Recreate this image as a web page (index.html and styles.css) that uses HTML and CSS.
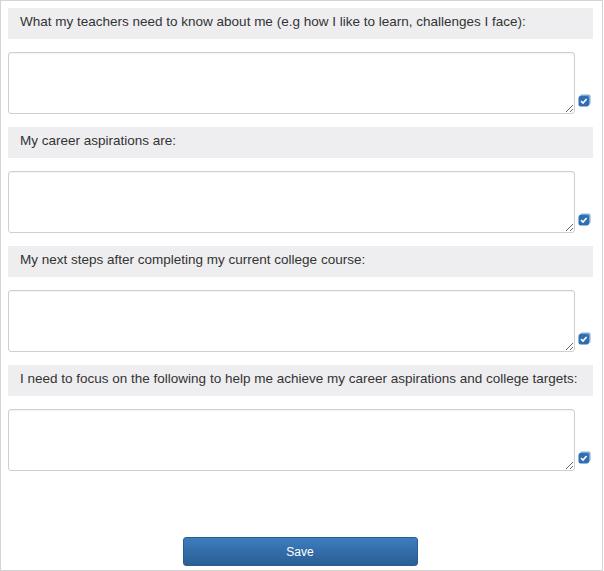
FILE: index.html
```html
<!DOCTYPE html>
<html lang="en">
<head>
  <meta charset="UTF-8">
  <title>My Profile</title>
  <link rel="stylesheet" href="styles.css">
</head>
<body>
  <div class="page">

    <div class="field">
      <div class="field-label">What my teachers need to know about me (e.g how I like to learn, challenges I face):</div>
      <div class="field-row">
        <textarea class="field-input"></textarea>
        <span class="spell-icon"><svg width="13" height="13" viewBox="0 0 13 13"><rect x="2" y="0.5" width="10.5" height="10.5" rx="2" fill="#7fa9d4"/><rect x="0.5" y="2" width="10.5" height="10.5" rx="2" fill="#2f6eb0"/><path d="M3 7.2 L5 9 L8.6 5" stroke="#fff" stroke-width="1.6" fill="none"/></svg></span>
      </div>
    </div>

    <div class="field">
      <div class="field-label">My career aspirations are:</div>
      <div class="field-row">
        <textarea class="field-input"></textarea>
        <span class="spell-icon"><svg width="13" height="13" viewBox="0 0 13 13"><rect x="2" y="0.5" width="10.5" height="10.5" rx="2" fill="#7fa9d4"/><rect x="0.5" y="2" width="10.5" height="10.5" rx="2" fill="#2f6eb0"/><path d="M3 7.2 L5 9 L8.6 5" stroke="#fff" stroke-width="1.6" fill="none"/></svg></span>
      </div>
    </div>

    <div class="field">
      <div class="field-label">My next steps after completing my current college course:</div>
      <div class="field-row">
        <textarea class="field-input"></textarea>
        <span class="spell-icon"><svg width="13" height="13" viewBox="0 0 13 13"><rect x="2" y="0.5" width="10.5" height="10.5" rx="2" fill="#7fa9d4"/><rect x="0.5" y="2" width="10.5" height="10.5" rx="2" fill="#2f6eb0"/><path d="M3 7.2 L5 9 L8.6 5" stroke="#fff" stroke-width="1.6" fill="none"/></svg></span>
      </div>
    </div>

    <div class="field">
      <div class="field-label">I need to focus on the following to help me achieve my career aspirations and college targets:</div>
      <div class="field-row">
        <textarea class="field-input"></textarea>
        <span class="spell-icon"><svg width="13" height="13" viewBox="0 0 13 13"><rect x="2" y="0.5" width="10.5" height="10.5" rx="2" fill="#7fa9d4"/><rect x="0.5" y="2" width="10.5" height="10.5" rx="2" fill="#2f6eb0"/><path d="M3 7.2 L5 9 L8.6 5" stroke="#fff" stroke-width="1.6" fill="none"/></svg></span>
      </div>
    </div>

    <div class="actions">
      <button class="save-btn">Save</button>
    </div>

  </div>
</body>
</html>
```

FILE: styles.css
```css
body {
  margin: 0;
  font-family: 'Liberation Sans', Arial, sans-serif;
  color: #333;
}

.page {
  box-sizing: border-box;
  width: 603px;
  height: 571px;
  border: 1px solid #d4d4d4;
  padding: 7px 0 0 7px;
}

.field {
  margin-bottom: 13px;
}

.field-label {
  box-sizing: border-box;
  width: 585px;
  height: 31px;
  padding: 4px 12px 0;
  background-color: #eeeef0;
  font-size: 13.5px;
  line-height: 20px;
  white-space: nowrap;
  margin-bottom: 13px;
}

.field-row {
  display: flex;
  align-items: flex-end;
}

.field-input {
  box-sizing: border-box;
  width: 567px;
  height: 62px;
  margin: 0;
  border: 1px solid #cfcfcf;
  border-radius: 3px;
  box-shadow: inset 0 1px 1px rgba(0, 0, 0, 0.05);
  font-family: inherit;
  font-size: 14px;
  resize: vertical;
}

.spell-icon {
  display: block;
  width: 13px;
  height: 13px;
  margin: 0 0 7px 3px;
}

.spell-icon svg {
  display: block;
}

.actions {
  display: flex;
  justify-content: center;
  padding-top: 53px;
  padding-right: 10px;
}

.save-btn {
  width: 235px;
  height: 29px;
  border: 1px solid #2b5c8f;
  border-radius: 3px;
  background: linear-gradient(to bottom, #3d7dbd, #2a5e95);
  color: white;
  font-family: inherit;
  font-size: 12px;
  cursor: pointer;
}
```
